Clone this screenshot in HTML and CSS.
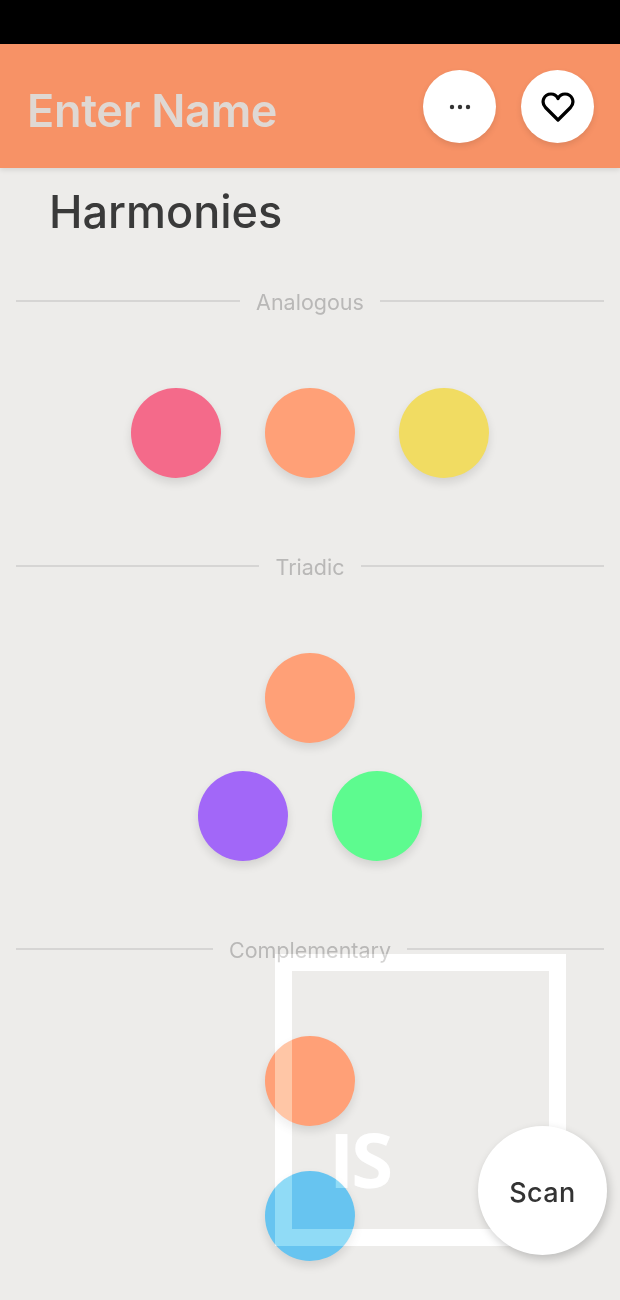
FILE: index.html
```html
<!DOCTYPE html>
<html>
<head lang="en">
    <meta charset="UTF-8">
    <title>Harmonies</title>
    <link rel="stylesheet" href="styles.css">
</head>
<body>
<div id="phone">
    <div class="status-bar"></div>
    <div class="header">
        <div class="name">Enter Name</div>
        <div class="round-btn">
            <svg width="24" height="6" viewBox="0 0 24 6"><circle cx="4" cy="3" r="2.2"/><circle cx="12" cy="3" r="2.2"/><circle cx="20" cy="3" r="2.2"/></svg>
        </div>
        <div class="round-btn">
            <svg class="heart" width="34" height="32" viewBox="0 0 34 32"><path d="M17 29 L4.5 16.5 C-0.5 11 3 3 10 3 C13 3 15.5 4.500 17 7.500 C18.500 4.500 21 3 24 3 C31 3 34.500 11 29.500 16.500 Z"/></svg>
        </div>
    </div>
    <h1 class="title">Harmonies</h1>

    <div class="watermark"><span>IS</span></div>

    <div class="rule"><span>Analogous</span></div>
    <div class="row first">
        <div class="dot pink"></div>
        <div class="dot orange"></div>
        <div class="dot yellow"></div>
    </div>

    <div class="rule"><span>Triadic</span></div>
    <div class="row first">
        <div class="dot orange"></div>
    </div>
    <div class="row second">
        <div class="dot purple"></div>
        <div class="dot green"></div>
    </div>

    <div class="rule"><span>Complementary</span></div>
    <div class="row first">
        <div class="dot orange"></div>
    </div>
    <div class="row third">
        <div class="dot blue"></div>
    </div>

    <div class="watermark glaze"><span>IS</span></div>
    <div class="scan">Scan</div>
</div>
</body>
</html>
```

FILE: styles.css
```css
*
{
    margin: 0;
    padding: 0;
    box-sizing: border-box;
}
body
{
    width: 620px;
    height: 1300px;
    overflow: hidden;
    background-color: #edecea;
    font-family: Inter, "Liberation Sans", sans-serif;
}
#phone
{
    width: 620px;
    height: 1300px;
    position: relative;
    overflow: hidden;
}
.status-bar
{
    height: 44px;
    background-color: #000;
}
.header
{
    height: 124px;
    display: flex;
    align-items: flex-start;
    padding: 26px 26px 0 27px;
    gap: 25px;
    background-color: #f79266;
    box-shadow: 0 2px 5px rgba(0, 0, 0, .1);
    position: relative;
}
.name
{
    flex: 1;
    margin-top: 14px;
    font-size: 45px;
    line-height: 54px;
    font-weight: 600;
    letter-spacing: -.3px;
    color: #dfd8d3;
}
.round-btn
{
    width: 73px;
    height: 73px;
    border-radius: 50%;
    background-color: #fff;
    box-shadow: 0 3px 6px rgba(0, 0, 0, .1);
    display: flex;
    align-items: center;
    justify-content: center;
}
.round-btn svg
{
    fill: #333;
}
.round-btn .heart
{
    fill: none;
    stroke: #000;
    stroke-width: 3.2;
    stroke-linejoin: round;
}
.title
{
    margin: 19px 0 0 49px;
    height: 49px;
    font-size: 45px;
    line-height: 50px;
    font-weight: 500;
    color: #3a3a3a;
}
.rule
{
    display: flex;
    align-items: center;
    gap: 16px;
    margin: 54px 16px 0;
    height: 24px;
    font-size: 21.5px;
    line-height: 24px;
    color: #b9b8b7;
    position: relative;
}
.rule:before,
.rule:after
{
    content: "";
    flex: 1;
    height: 2px;
    background-color: #d6d5d4;
    position: relative;
    top: -1px;
}
.row
{
    display: flex;
    justify-content: center;
    gap: 44px;
    position: relative;
}
.row.first
{
    margin-top: 74px;
}
.row.second
{
    margin-top: 28px;
}
.row.third
{
    margin-top: 45px;
}
.row + .rule
{
    margin-top: 77px;
}
.dot
{
    width: 90px;
    height: 90px;
    border-radius: 50%;
    box-shadow: 0 5px 10px rgba(0, 0, 0, .11);
}
.pink { background-color: #f46a8a; }
.orange { background-color: #ffa077; }
.yellow { background-color: #f1dc62; }
.purple { background-color: #a267f8; }
.green { background-color: #5dfb8f; }
.blue { background-color: #67c4f0; }
.watermark
{
    position: absolute;
    left: 275px;
    top: 954px;
    width: 291px;
    height: 292px;
    border: 17px solid #fff;
    color: #fff;
}
.watermark.glaze
{
    border-color: rgba(255, 255, 255, .4);
    color: rgba(255, 255, 255, .4);
    mix-blend-mode: overlay;
}
.watermark span
{
    position: absolute;
    left: 37px;
    top: 148px;
    font-family: "Open Sans", sans-serif;
    font-size: 76px;
    line-height: 80px;
    font-weight: 700;
    letter-spacing: -3px;
}
.scan
{
    position: absolute;
    left: 478px;
    top: 1126px;
    width: 129px;
    height: 129px;
    border-radius: 50%;
    background-color: #fff;
    box-shadow: 2px 4px 10px rgba(0, 0, 0, .2);
    display: flex;
    align-items: center;
    justify-content: center;
    padding-top: 4px;
    font-size: 27px;
    font-weight: 500;
    letter-spacing: .4px;
    color: #333;
}
```
